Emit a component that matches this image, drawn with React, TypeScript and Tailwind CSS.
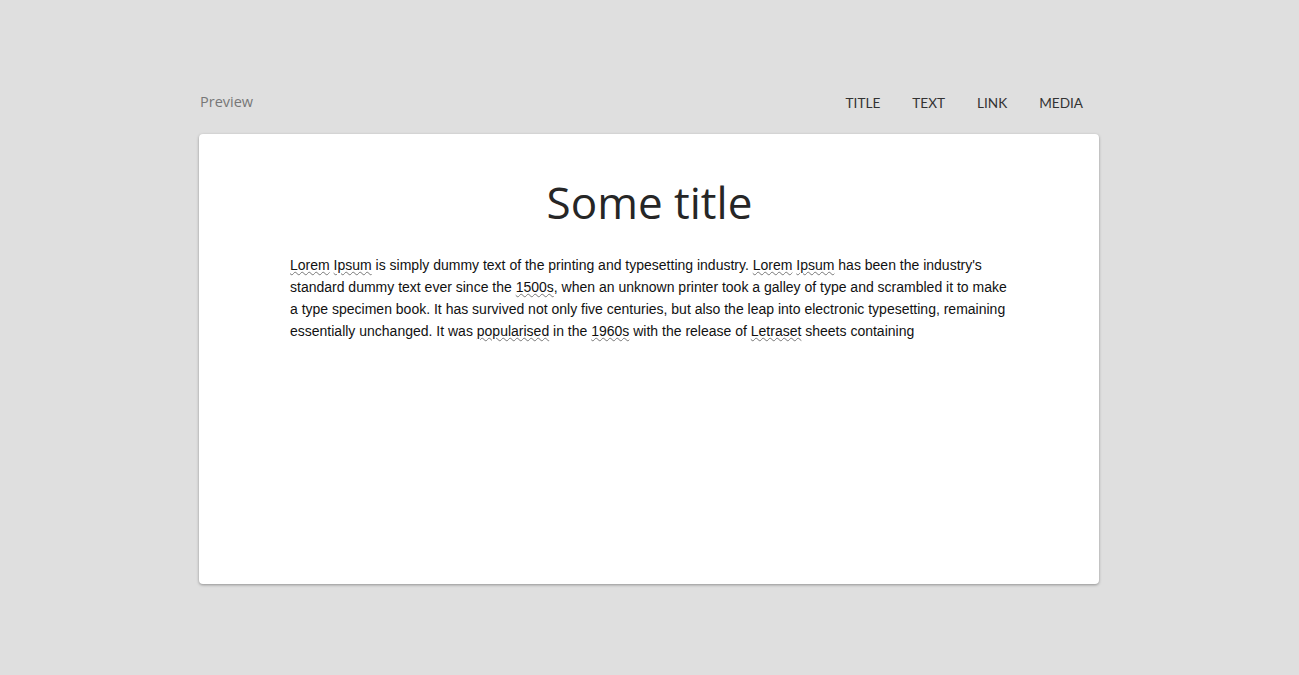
const misspelled = 'underline decoration-wavy decoration-[#777] decoration-1 underline-offset-[1px]';

function W({ children }: { children: string }) {
  return <span className={misspelled}>{children}</span>;
}

export default function App() {
  return (
    <div className="min-h-screen w-full bg-[#dfdfdf] pt-[86px] pl-[199px]">
      <div className="w-[900px]">
        {/* Header */}
        <div className="flex h-8 items-center justify-between mb-4">
          <span className="pl-px text-[14.5px] text-[#777] font-['Open_Sans',sans-serif]">Preview</span>
          <nav className="flex items-center font-['Lato',sans-serif] text-[13.6px] text-[#333]">
            {['TITLE', 'TEXT', 'LINK', 'MEDIA'].map(item => (
              <button key={item} className="px-4 pt-0.5 h-8 uppercase">
                {item}
              </button>
            ))}
          </nav>
        </div>

        {/* Card */}
        <div className="h-[450px] rounded bg-white pl-[91px] pr-[89px] pt-[42px] shadow-[0_1px_3px_rgba(0,0,0,0.35)]">
          <h1 className="-ml-px text-center text-[44px] leading-[52px] text-[#262626] font-['Open_Sans',sans-serif]">
            Some title
          </h1>
          <p className="mt-[26px] text-[14px] leading-[22px] text-[#111] font-['Liberation_Sans',Arial,sans-serif]">
            <W>Lorem</W> <W>Ipsum</W> is simply dummy text of the printing and typesetting industry. <W>Lorem</W>{' '}
            <W>Ipsum</W> has been the industry's standard dummy text ever since the <W>1500s</W>, when an unknown
            printer took a galley of type and scrambled it to make a type specimen book. It has survived not only
            five centuries, but also the leap into electronic typesetting, remaining essentially unchanged. It was{' '}
            <W>popularised</W> in the <W>1960s</W> with the release of <W>Letraset</W> sheets containing
          </p>
        </div>
      </div>
    </div>
  );
}
